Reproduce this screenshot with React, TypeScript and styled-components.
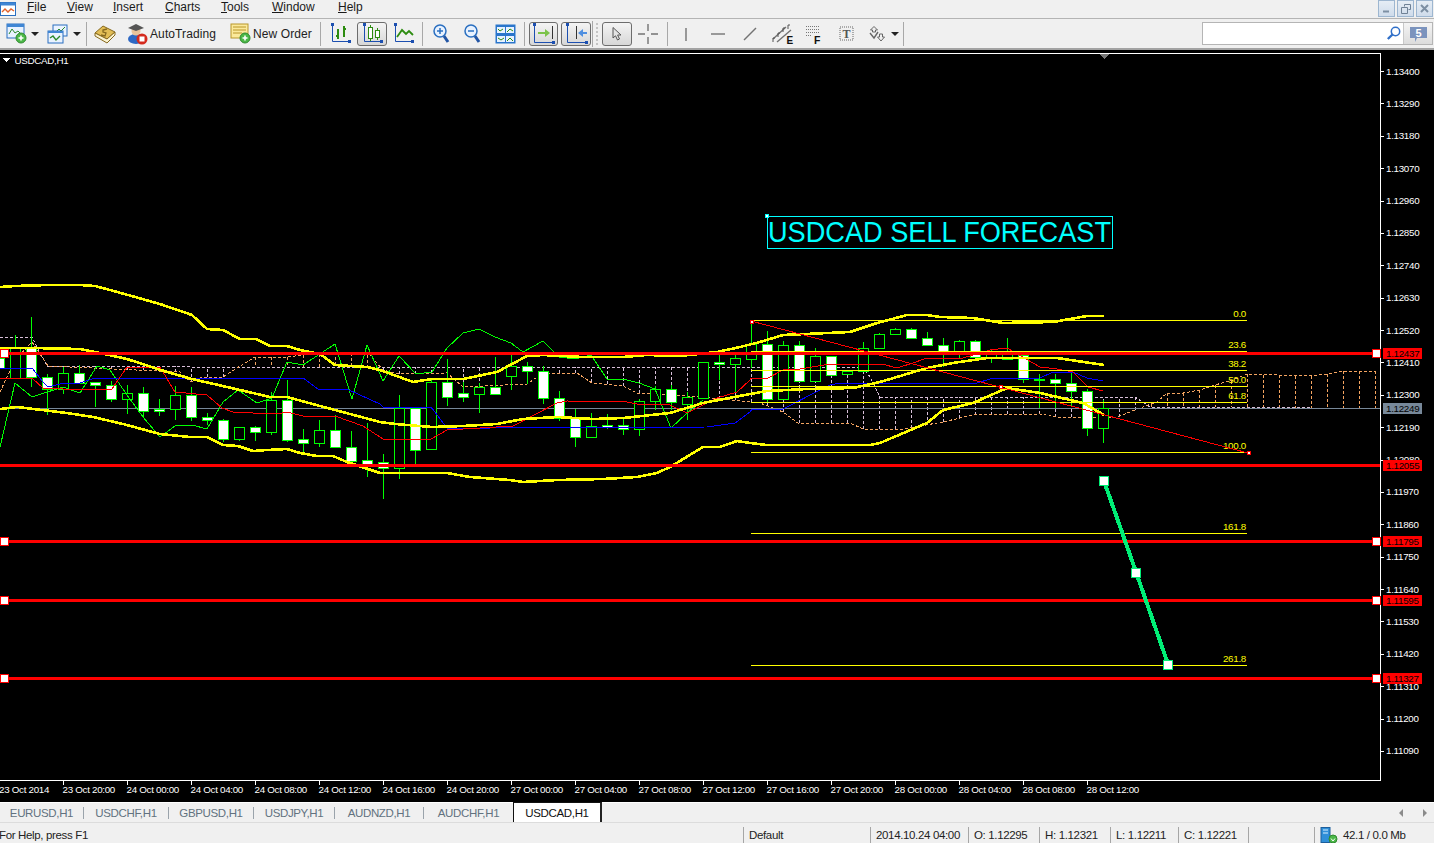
import React from 'react'
import styled, { createGlobalStyle } from 'styled-components'

const GlobalStyle = createGlobalStyle`
  html, body { margin: 0; padding: 0; background: #f0f0f0; overflow: hidden; }
`

type Pt = [number, number]
// x, high, low, body top, body bottom, bearish (white body)
type Candle = [number, number, number, number, number, boolean]

const candles: Candle[] = [
  [-1, 352, 378, 358, 368, true], [15, 335, 378, 347, 378, false], [31, 317, 387, 347, 377, true],
  [47, 374, 415, 377, 389, true], [63, 367, 394, 373, 389, false], [79, 365, 383, 373, 383, true],
  [95, 382, 407, 382, 385, true], [111, 381, 402, 385, 399, true], [127, 385, 414, 393, 399, false],
  [143, 387, 417, 393, 411, true], [159, 399, 416, 409, 411, true], [175, 386, 420, 395, 409, false],
  [191, 387, 421, 395, 417, true], [207, 413, 425, 417, 420, true], [223, 419, 442, 420, 439, true],
  [239, 427, 441, 427, 439, false], [255, 426, 441, 427, 432, true], [271, 392, 435, 400, 432, false],
  [287, 380, 442, 400, 440, true], [303, 429, 452, 439, 443, true], [319, 420, 447, 430, 443, false],
  [335, 415, 447, 430, 447, true], [351, 431, 461, 447, 461, true], [367, 423, 477, 460, 464, true],
  [383, 454, 499, 462, 468, true], [399, 395, 479, 408, 468, false], [415, 408, 465, 408, 450, true],
  [431, 378, 449, 382, 449, false], [447, 359, 406, 382, 397, true], [463, 382, 402, 393, 397, true],
  [479, 383, 413, 387, 394, false], [495, 357, 394, 387, 394, true], [511, 355, 390, 366, 376, false],
  [527, 362, 384, 366, 371, true], [543, 366, 404, 371, 398, true], [559, 391, 421, 398, 418, true],
  [575, 409, 447, 418, 437, true], [591, 413, 437, 426, 437, false], [607, 414, 429, 425, 427, true],
  [623, 418, 435, 425, 429, true], [639, 399, 436, 401, 429, false], [655, 386, 410, 389, 401, false],
  [671, 385, 410, 389, 402, true], [687, 392, 420, 397, 404, false], [703, 362, 398, 362, 398, false],
  [719, 355, 380, 362, 364, true], [735, 355, 392, 358, 364, false], [751, 322, 368, 344, 359, false],
  [767, 331, 403, 344, 399, true], [783, 341, 400, 345, 399, false], [799, 341, 382, 345, 381, true],
  [815, 348, 382, 356, 381, false], [831, 356, 375, 356, 375, true], [847, 371, 375, 371, 374, false],
  [863, 342, 372, 348, 371, false], [879, 333, 348, 334, 348, false], [895, 328, 335, 329, 334, false],
  [911, 328, 338, 329, 338, true], [927, 332, 346, 338, 345, true], [943, 338, 367, 345, 353, true],
  [959, 340, 358, 341, 353, false], [975, 340, 358, 341, 357, true], [991, 350, 363, 353, 357, false],
  [1007, 338, 360, 351, 359, false], [1023, 355, 383, 355, 379, true], [1039, 374, 408, 379, 380, false],
  [1055, 374, 408, 379, 383, true], [1071, 373, 407, 383, 391, true], [1087, 389, 436, 391, 428, true],
  [1103, 400, 443, 408, 428, false],
]

const bandUpper: Pt[] = [
  [0, 287], [15, 286], [48, 285], [80, 285], [95, 286], [110, 290], [128, 295], [160, 304], [192, 315], [207, 329],
  [223, 330], [240, 339], [256, 339], [270, 346], [287, 346], [300, 350], [320, 354], [335, 365], [367, 367],
  [380, 370], [413, 382], [432, 379], [463, 379], [497, 372], [527, 356], [543, 355], [583, 357], [623, 357],
  [647, 355], [680, 356], [717, 352], [740, 347], [760, 342], [783, 335], [850, 332], [877, 323], [907, 315],
  [927, 315], [940, 317], [973, 318], [1003, 323], [1053, 322], [1087, 316], [1104, 316],
]
const bandMiddle: Pt[] = [
  [0, 348], [33, 348], [80, 349], [100, 353], [127, 359], [167, 372], [192, 379], [240, 390], [270, 397], [287, 397],
  [320, 406], [380, 422], [395, 424], [432, 427], [463, 426], [497, 424], [523, 419], [557, 417], [593, 419],
  [623, 418], [670, 413], [703, 403], [750, 394], [767, 391], [807, 389], [853, 388], [880, 382], [927, 368],
  [953, 363], [987, 358], [1057, 358], [1104, 365],
]
const bandLower: Pt[] = [
  [0, 409], [17, 407], [67, 413], [93, 417], [123, 424], [160, 434], [190, 437], [207, 437], [223, 445], [238, 446],
  [253, 451], [267, 450], [287, 449], [300, 453], [317, 456], [333, 456], [347, 462], [380, 473], [387, 473],
  [447, 473], [470, 477], [510, 480], [523, 482], [557, 480], [603, 479], [637, 477], [657, 473], [670, 467],
  [703, 447], [720, 447], [737, 441], [750, 443], [767, 445], [870, 445], [880, 443], [927, 423], [943, 410],
  [973, 403], [1007, 388], [1040, 393], [1083, 403], [1104, 415],
]
const blueLine: Pt[] = [
  [0, 368], [32, 368], [43, 382], [48, 387], [60, 384], [80, 383], [95, 378], [303, 378], [318, 389], [347, 389],
  [380, 404], [383, 407], [431, 407], [447, 428], [483, 429], [490, 428], [707, 427], [735, 423], [750, 412],
  [752, 409], [783, 409], [820, 390], [830, 385], [840, 383], [977, 383], [990, 379], [1040, 378], [1053, 372],
  [1073, 372], [1087, 378], [1103, 381],
]
const redLine: Pt[] = [
  [0, 378], [32, 378], [43, 388], [63, 389], [112, 389], [127, 367], [160, 367], [175, 392], [207, 395], [222, 408],
  [233, 412], [253, 413], [277, 414], [287, 412], [303, 416], [335, 416], [363, 426], [383, 439], [431, 439],
  [447, 430], [513, 426], [557, 403], [567, 401], [627, 402], [637, 404], [670, 405], [687, 413], [717, 398],
  [737, 392], [750, 380], [750, 378], [768, 378], [783, 370], [800, 369], [830, 364], [882, 364], [897, 368],
  [913, 363], [927, 358], [963, 358], [990, 350], [1007, 348], [1040, 367], [1057, 369], [1073, 372], [1088, 387],
  [1103, 391],
]
const greenLine: Pt[] = [
  [0, 447], [15, 383], [32, 397], [63, 387], [80, 393], [97, 366], [110, 370], [127, 395], [143, 417], [160, 437],
  [175, 426], [192, 425], [207, 429], [223, 402], [238, 390], [257, 403], [272, 398], [287, 362], [303, 365],
  [335, 344], [352, 399], [367, 345], [383, 381], [399, 356], [416, 374], [432, 372], [447, 348], [463, 333],
  [479, 329], [495, 337], [511, 343], [523, 352], [543, 341], [559, 357], [575, 359], [591, 355], [607, 379],
  [623, 379], [639, 383], [655, 389], [671, 428], [687, 413], [703, 400],
]
const cloudB: Pt[] = [
  [0, 337], [32, 337], [35, 343], [47, 366], [175, 366], [191, 367], [863, 367],
  [870, 377], [880, 397], [1135, 397], [1150, 407], [1247, 407], [1376, 409],
]
const cloudA: Pt[] = [
  [0, 392], [7, 377], [17, 358], [32, 342], [42, 357], [48, 366], [180, 372], [191, 382], [203, 377], [223, 377],
  [240, 366], [255, 357], [287, 357], [303, 355], [335, 352], [370, 355], [383, 370], [399, 374], [447, 373],
  [463, 387], [527, 384], [543, 373], [577, 373], [592, 383], [623, 386], [637, 393], [703, 397], [750, 402],
  [760, 403], [783, 412], [798, 423], [850, 423], [863, 429], [903, 429], [943, 422], [973, 415], [1040, 414],
  [1057, 417], [1118, 417], [1137, 409], [1157, 402], [1167, 393], [1183, 393], [1200, 390], [1215, 385],
  [1233, 380], [1247, 374], [1310, 376], [1327, 374], [1343, 371], [1376, 371],
]

const priceLabels = [
  '1.13400', '1.13290', '1.13180', '1.13070', '1.12960', '1.12850', '1.12740', '1.12630', '1.12520', '1.12410', '1.12300',
  '1.12190', '1.12080', '1.11970', '1.11860', '1.11750', '1.11640', '1.11530', '1.11420', '1.11310', '1.11200', '1.11090',
]
const timeLabels = [
  '23 Oct 20:00', '24 Oct 00:00', '24 Oct 04:00', '24 Oct 08:00', '24 Oct 12:00', '24 Oct 16:00', '24 Oct 20:00',
  '27 Oct 00:00', '27 Oct 04:00', '27 Oct 08:00', '27 Oct 12:00', '27 Oct 16:00', '27 Oct 20:00', '28 Oct 00:00',
  '28 Oct 04:00', '28 Oct 08:00', '28 Oct 12:00',
]
const fibLevels: [string, number][] = [
  ['0.0', 320.5], ['23.6', 351.5], ['38.2', 370.5], ['50.0', 386.5], ['61.8', 402.5], ['100.0', 452.5],
  ['161.8', 533.5], ['261.8', 665.5],
]
const redLevels: { y: number; label: string; left: boolean; right: boolean }[] = [
  { y: 353, label: '1.12437', left: true, right: true },
  { y: 465, label: '1.12055', left: false, right: false },
  { y: 541, label: '1.11795', left: true, right: true },
  { y: 600, label: '1.11595', left: true, right: true },
  { y: 678, label: '1.11327', left: true, right: true },
]

const toPoints = (pts: Pt[]) => pts.map((p) => p.join(',')).join(' ')
const yAt = (pts: Pt[], x: number) => {
  for (let i = 1; i < pts.length; i++) {
    if (x <= pts[i][0] && pts[i][0] > pts[i - 1][0]) {
      const t = (x - pts[i - 1][0]) / (pts[i][0] - pts[i - 1][0])
      return pts[i - 1][1] + t * (pts[i][1] - pts[i - 1][1])
    }
  }
  return pts[pts.length - 1][1]
}

const Page = styled.div`
  width: 1434px;
  height: 843px;
  display: flex;
  flex-direction: column;
  overflow: hidden;
  background: #f0f0f0;
  font-family: "Liberation Sans", Arial, sans-serif;
  color: #111;
`
const MenuBar = styled.div`
  height: 18px;
  flex: none;
  display: flex;
  align-items: flex-start;
  position: relative;
  border-bottom: 1px solid #b4b4b4;
  font-size: 12px;
  line-height: 15px;
`
const AppIcon = styled.div`
  width: 27px;
  height: 18px;
  flex: none;
  display: flex;
  align-items: center;
`
const MenuItem = styled.span<{ $w: number }>`
  width: ${(p) => p.$w}px;
  flex: none;
  color: #1a1a1a;
`
const WindowButtons = styled.div`
  margin-left: auto;
  display: flex;
  gap: 2px;
  height: 17px;
  margin-right: 1px;
`
const WindowButton = styled.div`
  width: 17px;
  height: 17px;
  box-sizing: border-box;
  border: 1px solid #9db6d0;
  background: linear-gradient(#e6edf5, #cfdceb);
  display: flex;
  align-items: center;
  justify-content: center;
`
const Toolbar = styled.div`
  height: 29px;
  flex: none;
  display: flex;
  align-items: center;
  padding-left: 4px;
  border-bottom: 2px solid #a3a3a3;
  font-size: 12px;
`
const Slot = styled.div<{ $w: number; $ml?: number }>`
  width: ${(p) => p.$w}px;
  margin-left: ${(p) => p.$ml || 0}px;
  height: 24px;
  flex: none;
  display: flex;
  align-items: center;
  justify-content: center;
`
const Pressed = styled(Slot)`
  box-sizing: border-box;
  border: 1px solid #6d6d6d;
  border-radius: 3px;
  background: linear-gradient(#f4f4f4, #d7d7d7);
`
const Caret = styled.div<{ $w: number }>`
  width: ${(p) => p.$w}px;
  flex: none;
  display: flex;
  justify-content: center;
  &::after {
    content: "";
    border-left: 4px solid transparent;
    border-right: 4px solid transparent;
    border-top: 4px solid #222;
  }
`
const Sep = styled.div<{ $ml: number }>`
  width: 1px;
  height: 24px;
  flex: none;
  margin-left: ${(p) => p.$ml}px;
  background: #a8a8a8;
`
const Grip = styled.div`
  width: 11px;
  height: 26px;
  flex: none;
  position: relative;
  border-left: 1px solid #a8a8a8;
  margin-left: 1px;
  margin-right: -1px;
  box-sizing: border-box;
  &::after {
    content: "";
    position: absolute;
    left: 3px;
    top: 2px;
    bottom: 2px;
    width: 2px;
    background: repeating-linear-gradient(#c4c4c4 0 2px, transparent 2px 4px);
  }
`
const LabelledTool = styled.div<{ $ml: number; $w: number }>`
  display: flex;
  align-items: center;
  gap: 2px;
  flex: none;
  width: ${(p) => p.$w}px;
  white-space: nowrap;
  margin-left: ${(p) => p.$ml}px;
  color: #222;
  letter-spacing: 0.1px;
`
const SearchBox = styled.div`
  margin-left: auto;
  margin-right: 1px;
  width: 231px;
  height: 23px;
  box-sizing: border-box;
  border: 1px solid #b5b5b5;
  display: flex;
  flex: none;
`
const SearchInput = styled.div`
  width: 200px;
  background: #fff;
  display: flex;
  align-items: center;
  justify-content: flex-end;
  padding-right: 2px;
  box-sizing: border-box;
`
const MessageButton = styled.div`
  flex: 1;
  display: flex;
  align-items: center;
  justify-content: center;
  border-left: 1px solid #c8c8c8;
  background: linear-gradient(#f4f4f4, #dcdcdc);
`
const ChartArea = styled.svg`
  display: block;
  flex: none;
  width: 1434px;
  height: 752px;
  background: #000;
  shape-rendering: crispEdges;
`
const AxisText = styled.text`
  font-family: "Liberation Sans", Arial, sans-serif;
  font-size: 9.8px;
  letter-spacing: -0.3px;
  fill: #fff;
`
const FibText = styled(AxisText)`
  fill: #ffff00;
  text-anchor: end;
`
const PriceTagText = styled(AxisText)`
  fill: #000;
`
const ForecastText = styled.text`
  font-family: "Liberation Sans", Arial, sans-serif;
  font-size: 29px;
  fill: #00ffff;
`
const TabsRow = styled.div`
  height: 21px;
  flex: none;
  display: flex;
  align-items: stretch;
  border-top: 1px solid #fff;
  border-bottom: 1px solid #dcdcdc;
  box-sizing: border-box;
  font-size: 11.5px;
`
const Tab = styled.div<{ $w: number; $active?: boolean }>`
  width: ${(p) => p.$w}px;
  flex: none;
  box-sizing: border-box;
  display: flex;
  align-items: center;
  justify-content: center;
  letter-spacing: -0.35px;
  color: ${(p) => (p.$active ? '#111' : '#62727f')};
  background: ${(p) => (p.$active ? '#fff' : 'transparent')};
  border-left: ${(p) => (p.$active ? '1px solid #111' : 'none')};
  border-right: ${(p) => (p.$active ? '2px solid #222' : 'none')};
  border-top: ${(p) => (p.$active ? '1px solid #111' : 'none')};
  position: relative;
  margin-top: ${(p) => (p.$active ? '-1px' : '0')};
`
const TabDivider = styled.div`
  width: 1px;
  height: 12px;
  flex: none;
  align-self: center;
  background: #9aa3ab;
`
const TabArrows = styled.div`
  margin-left: auto;
  display: flex;
  align-items: center;
  gap: 20px;
  padding-right: 7px;
`
const ArrowGlyph = styled.div<{ $dir: 'left' | 'right' }>`
  width: 0;
  height: 0;
  border-top: 4px solid transparent;
  border-bottom: 4px solid transparent;
  ${(p) => (p.$dir === 'left' ? 'border-right: 4px solid #8b8b8b;' : 'border-left: 4px solid #8b8b8b;')}
`
const StatusBar = styled.div`
  flex: 1;
  display: flex;
  align-items: flex-end;
  font-size: 11.5px;
  letter-spacing: -0.35px;
  color: #222;
  overflow: hidden;
`
const StatusCell = styled.div<{ $w: number; $divider?: boolean }>`
  width: ${(p) => p.$w}px;
  flex: none;
  height: 16px;
  box-sizing: border-box;
  display: flex;
  align-items: center;
  gap: 5px;
  white-space: nowrap;
  padding-left: ${(p) => (p.$divider ? 5 : 0)}px;
  border-left: ${(p) => (p.$divider ? '1px solid #a6a6a6' : 'none')};
`
const HelpText = styled.span`
  margin-left: -1px;
`

const NewChartIcon = () => (
  <svg width="22" height="21" viewBox="0 0 22 21">
    <rect x="1" y="1" width="17" height="14" fill="#e8f2ff" stroke="#2a6fc0" />
    <rect x="1" y="1" width="17" height="3" fill="#3f86d4" />
    <path d="M3 11 L6 6 L9 10 L12 8 L16 12" fill="none" stroke="#2c8a2c" />
    <circle cx="15" cy="15" r="5" fill="#4cb848" stroke="#2f8a2f" />
    <path d="M12.5 15h5M15 12.5v5" stroke="#fff" strokeWidth="1.6" />
  </svg>
)
const ProfilesIcon = () => (
  <svg width="21" height="20" viewBox="0 0 21 20">
    <rect x="6" y="1" width="14" height="11" fill="#eaf3ff" stroke="#2a6fc0" />
    <path d="M9 8 L12 5 L14 7 L18 3" fill="none" stroke="#2c8a2c" />
    <rect x="1" y="7" width="15" height="12" fill="#eaf3ff" stroke="#2a6fc0" />
    <rect x="1" y="7" width="15" height="2" fill="#3f86d4" />
    <path d="M3 14 L6 12 L9 16 L13 12" fill="none" stroke="#2c8a2c" strokeWidth="1.4" />
  </svg>
)
const BookIcon = () => (
  <svg width="22" height="20" viewBox="0 0 22 20">
    <path d="M1 9 L9 2 L21 8 L13 15 Z" fill="#e2bd55" stroke="#86691f" />
    <path d="M1 9 L1 12 L13 19 L21 11 L21 8 L13 15 Z" fill="#fbf3d0" stroke="#86691f" />
    <path d="M13 5 L9 6 L9 8 L12 9 L11 12 L7 11" fill="none" stroke="#86691f" strokeWidth="1.3" />
  </svg>
)
const AutoTradingIcon = () => (
  <svg width="21" height="22" viewBox="0 0 21 22">
    <ellipse cx="9" cy="16" rx="8" ry="5" fill="#2d68c4" />
    <circle cx="9" cy="8" r="4.5" fill="#e9c39a" />
    <path d="M1 5 L9 1 L17 5 L9 8 Z" fill="#555" />
    <circle cx="15" cy="16" r="5.5" fill="#d42a1e" />
    <rect x="12.5" y="13.5" width="5" height="5" fill="#fff" />
  </svg>
)
const NewOrderIcon = () => (
  <svg width="21" height="21" viewBox="0 0 21 21">
    <rect x="1" y="1" width="17" height="14" fill="#fbe99b" stroke="#b8962a" />
    <path d="M3 4h13M3 7h13M3 10h9" stroke="#b8962a" />
    <circle cx="15" cy="15" r="5" fill="#4cb848" stroke="#2f8a2f" />
    <path d="M12.5 15h5M15 12.5v5" stroke="#fff" strokeWidth="1.6" />
  </svg>
)
const Axes = () => (
  <>
    <path d="M2.5 1V18.5H20" fill="none" stroke="#1c4fb0" />
    <rect x="1" y="0" width="3" height="3" fill="#1c4fb0" />
    <rect x="18" y="17" width="3" height="3" fill="#1c4fb0" />
  </>
)
const BarChartIcon = () => (
  <svg width="21" height="21" viewBox="0 0 21 21">
    <Axes />
    <path d="M8 6v10M6 13h2M14 3v11M14 6h2" stroke="#2d8c10" strokeWidth="2" />
  </svg>
)
const CandleChartIcon = () => (
  <svg width="21" height="21" viewBox="0 0 21 21">
    <Axes />
    <rect x="6.5" y="4.5" width="4" height="11" fill="#fff" stroke="#2d8c10" />
    <rect x="13.5" y="7.5" width="4" height="7" fill="#fff" stroke="#2d8c10" />
    <path d="M8.5 2v2M8.5 16v2M15.5 5v2M15.5 15v2" stroke="#2d8c10" />
  </svg>
)
const LineChartIcon = () => (
  <svg width="21" height="21" viewBox="0 0 21 21">
    <Axes />
    <path d="M4 14 L9 7 L13 11 L16 8 L20 12" fill="none" stroke="#2d8c10" strokeWidth="1.8" />
  </svg>
)
const ZoomIcon = ({ plus }: { plus: boolean }) => (
  <svg width="17" height="20" viewBox="0 0 17 20">
    <circle cx="7" cy="7" r="6" fill="#e8f2ff" stroke="#2a6fc0" strokeWidth="1.5" />
    <path d="M4 7h6" stroke="#2a6fc0" strokeWidth="1.5" />
    {plus && <path d="M7 4v6" stroke="#2a6fc0" strokeWidth="1.5" />}
    <path d="M11 12 L15 18" stroke="#2255a5" strokeWidth="3" />
  </svg>
)
const TileIcon = () => (
  <svg width="21" height="20" viewBox="0 0 21 20">
    <rect x="0.5" y="0.5" width="20" height="19" fill="#2a76cc" />
    <rect x="2" y="3" width="8" height="6" fill="#e8f2ff" />
    <rect x="11" y="3" width="8" height="6" fill="#e8f2ff" />
    <rect x="2" y="12" width="8" height="6" fill="#e8f2ff" />
    <rect x="11" y="12" width="8" height="6" fill="#e8f2ff" />
    <path d="M3 5 L5 7 L8 5M12 8 L15 5 L18 7M3 14 L6 16 L9 14M12 17 L15 14 L18 17" fill="none" stroke="#2d8c10" />
  </svg>
)
const AutoScrollIcon = () => (
  <svg width="25" height="22" viewBox="0 0 25 22">
    <path d="M3.5 1V19.5H24" fill="none" stroke="#1c4fb0" />
    <rect x="2" y="0" width="3" height="3" fill="#1c4fb0" />
    <rect x="21" y="18" width="3" height="3" fill="#1c4fb0" />
    <path d="M7 9h7V6l5 4-5 4v-3H7z" fill="#7cc34a" />
    <path d="M21.5 3v13" stroke="#333" />
  </svg>
)
const ChartShiftIcon = () => (
  <svg width="25" height="22" viewBox="0 0 25 22">
    <path d="M3.5 1V19.5H24" fill="none" stroke="#1c4fb0" />
    <rect x="2" y="0" width="3" height="3" fill="#1c4fb0" />
    <rect x="21" y="18" width="3" height="3" fill="#1c4fb0" />
    <path d="M12.5 3v13" stroke="#333" />
    <path d="M23 9h-4V6l-5 4 5 4v-3h4z" fill="#4f8fe0" />
  </svg>
)
const CursorIcon = () => (
  <svg width="12" height="14" viewBox="0 0 12 14">
    <path d="M2 0.5 V11 L4.5 8.8 L6.5 13 L8.5 12 L6.6 8 L10 8 Z" fill="#e4e4e4" stroke="#555" />
  </svg>
)
const ThinIcon = ({ d, size = 20 }: { d: string; size?: number }) => (
  <svg width={size} height={size} viewBox="0 0 20 20">
    <path d={d} fill="none" stroke="#737373" strokeWidth="1.4" />
  </svg>
)
const ChannelsIcon = () => (
  <svg width="22" height="20" viewBox="0 0 22 20">
    <path d="M1 15 L14 3M5 18 L19 6" stroke="#737373" strokeWidth="1.4" />
    <path d="M1 18v-4h2M6 13V9h2M11 8V4h2M16 5V1h2" fill="none" stroke="#555" />
    <text x="14.5" y="19.5" fontFamily="Liberation Sans" fontSize="10" fontWeight="700" fill="#111">E</text>
  </svg>
)
const FiboIcon = () => (
  <svg width="16" height="20" viewBox="0 0 16 20">
    <path d="M1 2.5h13M1 5.5h13M1 8.5h13M1 11.5h6" stroke="#777" strokeDasharray="1 1" />
    <text x="9" y="19.5" fontFamily="Liberation Sans" fontSize="10.5" fontWeight="700" fill="#111">F</text>
  </svg>
)
const TextToolIcon = () => (
  <svg width="15" height="16" viewBox="0 0 15 16">
    <rect x="1" y="1" width="13" height="13" fill="none" stroke="#666" strokeDasharray="1 1" />
    <text x="3.5" y="12" fontFamily="Liberation Serif" fontSize="12" fontWeight="700" fill="#555">T</text>
  </svg>
)
const ArrowsIcon = () => (
  <svg width="16" height="16" viewBox="0 0 16 16">
    <path d="M5 0.5 L8.5 4 L6.5 4 L6.5 6 L3.5 6 L3.5 4 L1.5 4 Z" fill="none" stroke="#666" />
    <path d="M1 7 L5 12 L9 6" fill="none" stroke="#666" strokeWidth="1.4" />
    <path d="M10.5 8 L13.5 8 L13.5 11 L15.5 11 L12 15 L8.5 11 L10.5 11 Z" fill="none" stroke="#666" />
  </svg>
)
const ServerIcon = () => (
  <svg width="18" height="16" viewBox="0 0 18 16">
    <rect x="1" y="0.5" width="9" height="15" fill="#2f8fd8" stroke="#1c5e9c" />
    <path d="M3 3h5M3 6h5" stroke="#d8eeff" />
    <circle cx="13" cy="12" r="4" fill="#4cb848" stroke="#2f8a2f" />
    <path d="M11 11.5 L13 14 L15 11.5" fill="none" stroke="#fff" />
  </svg>
)

const Chart = () => {
  const ticksX: number[] = []
  for (let x = 15; x <= 1375; x += 16) ticksX.push(x)
  const cy = (y: number) => y - 50
  const yLine = (pts: Pt[]) => pts.map((p) => [p[0], cy(p[1])] as Pt)
  const handle = (x: number, y: number, size: number, stroke: string, key: string) => (
    <rect key={key} x={x - size / 2 + 0.5} y={cy(y) - size / 2 + 0.5} width={size} height={size} fill="#fff" stroke={stroke} />
  )
  return (
    <ChartArea viewBox="0 0 1434 752">
      {/* chart frame */}
      <path d="M0 3.5H1380.5V730.5H0" fill="none" stroke="#fff" />
      {priceLabels.map((p, i) => {
        const y = 71 + i * 32.38
        return (
          <g key={p}>
            <path d={`M1380 ${Math.round(cy(y)) + 0.5}h4`} stroke="#fff" />
            <AxisText x="1386" y={cy(y) + 3.5}>{p}</AxisText>
          </g>
        )
      })}
      <AxisText x="-1" y={cy(792.5)}>23 Oct 2014</AxisText>
      {timeLabels.map((t, i) => {
        const x = 63 + i * 64
        return (
          <g key={t}>
            <path d={`M${x + 0.5} 731v4`} stroke="#fff" />
            <AxisText x={x - 0.5} y={cy(792.5)}>{t}</AxisText>
          </g>
        )
      })}
      {/* symbol caption and shift marker */}
      <path d="M3 8h7l-3.5 4z" fill="#fff" />
      <AxisText x="14.5" y="13.5">USDCAD,H1</AxisText>
      <path d="M1099 4h10l-5 5z" fill="#777" />

      {/* ichimoku cloud */}
      {ticksX.map((x) => {
        const a = yAt(cloudA, x)
        const b = yAt(cloudB, x)
        return (
          <path
            key={x}
            d={`M${x + 0.5} ${cy(a)}V${cy(b)}`}
            stroke={a < b ? '#f4a460' : '#d8bfd8'}
            strokeDasharray="3 2"
          />
        )
      })}
      <polyline points={toPoints(yLine(cloudB))} fill="none" stroke="#d8bfd8" strokeDasharray="3 2" />
      <polyline points={toPoints(yLine(cloudA))} fill="none" stroke="#f4a460" strokeDasharray="3 2" />

      {/* bid line */}
      <path d={`M0 ${cy(408) + 0.5}H1380`} stroke="#778899" />

      {/* candles */}
      {candles.map(([x, high, low, top, bottom, bear]) => (
        <g key={x}>
          <path d={`M${x + 0.5} ${cy(high)}V${cy(low)}`} stroke="#00ff00" />
          <rect
            x={x - 4.5}
            y={cy(top) + 0.5}
            width={10}
            height={Math.max(bottom - top, 1)}
            fill={bear ? '#fff' : '#000'}
            stroke="#00ff00"
          />
        </g>
      ))}

      {/* indicators */}
      <polyline points={toPoints(yLine(greenLine))} fill="none" stroke="#00ff00" />
      <polyline points={toPoints(yLine(blueLine))} fill="none" stroke="#0000ff" />
      <polyline points={toPoints(yLine(redLine))} fill="none" stroke="#ff0000" />
      <polyline points={toPoints(yLine(bandUpper))} fill="none" stroke="#ffff00" strokeWidth="2.6" />
      <polyline points={toPoints(yLine(bandMiddle))} fill="none" stroke="#ffff00" strokeWidth="2.6" />
      <polyline points={toPoints(yLine(bandLower))} fill="none" stroke="#ffff00" strokeWidth="2.6" />

      {/* horizontal levels */}
      {redLevels.map((l) => (
        <g key={l.y}>
          <rect x="0" y={cy(l.y) - 1} width="1380" height="3" fill="#ff0000" />
        </g>
      ))}

      {/* fibonacci */}
      {fibLevels.map(([label, y]) => (
        <g key={label}>
          <path d={`M751 ${cy(y)}H1247`} stroke="#ffff00" />
          <FibText x="1246" y={cy(y) - 4}>{label}</FibText>
        </g>
      ))}
      <path d={`M751 ${cy(321)}L1248 ${cy(453)}`} stroke="#ff0000" />
      {handle(751, 321, 3, '#ff0000', 'f1')}
      {handle(1000, 386, 3, '#ff0000', 'f2')}
      {handle(1248, 452, 3, '#ff0000', 'f3')}

      {/* level handles and price tags */}
      {redLevels.map((l) => (
        <g key={l.y}>
          {l.left && handle(4, l.y, 8, '#ff0000', 'l')}
          {l.right && handle(1376, l.y, 8, '#ff0000', 'r')}
        </g>
      ))}
      <rect x="1383" y={cy(403)} width="39" height="11" fill="#778899" />
      <PriceTagText x="1386" y={cy(412)}>1.12249</PriceTagText>
      {redLevels.map((l) => (
        <g key={l.label}>
          <rect x="1383" y={cy(l.y) - 5} width="39" height="11" fill="#ff0000" />
          <PriceTagText x="1386" y={cy(l.y) + 4}>{l.label}</PriceTagText>
        </g>
      ))}

      {/* forecast line */}
      <polyline
        points={`1104,${cy(481)} 1136,${cy(572)} 1168,${cy(664)}`}
        fill="none"
        stroke="#00ee76"
        strokeWidth="4"
      />
      {handle(1103.5, 480.5, 9, '#00ee76', 'g1')}
      {handle(1135.5, 572.5, 9, '#00ee76', 'g2')}
      {handle(1167.5, 664, 9, '#00ee76', 'g3')}

      {/* forecast caption */}
      <rect x="767.5" y={cy(216.5)} width="345" height="32" fill="none" stroke="#00ffff" />
      <rect x="765.5" y={cy(214.5)} width="3" height="3" fill="#fff" stroke="#00ffff" />
      <ForecastText x="768" y={cy(242)} textLength="343" lengthAdjust="spacingAndGlyphs">USDCAD SELL FORECAST</ForecastText>
    </ChartArea>
  )
}

const tabs: [string, number][] = [
  ['EURUSD,H1', 83], ['USDCHF,H1', 84], ['GBPUSD,H1', 84], ['USDJPY,H1', 80], ['AUDNZD,H1', 88], ['AUDCHF,H1', 89],
]
const menus: [string, string, number][] = [
  ['F', 'ile', 40], ['V', 'iew', 46], ['I', 'nsert', 52], ['C', 'harts', 56], ['T', 'ools', 51], ['W', 'indow', 66], ['H', 'elp', 40],
]

export default function App() {
  return (
    <Page>
      <GlobalStyle />
      <MenuBar>
        <AppIcon>
          <svg width="17" height="16" viewBox="0 0 17 16">
            <rect x="0.5" y="1.5" width="15" height="13" fill="#fff" stroke="#2a6fc0" />
            <rect x="0.5" y="1.5" width="15" height="3" fill="#3f86d4" />
            <path d="M2 11 L5 8 L8 11 L11 8 L14 10" fill="none" stroke="#e2622a" strokeWidth="1.4" />
          </svg>
        </AppIcon>
        {menus.map(([key, rest, w]) => (
          <MenuItem key={key} $w={w}><u>{key}</u>{rest}</MenuItem>
        ))}
        <WindowButtons>
          <WindowButton>
            <svg width="9" height="9" viewBox="0 0 9 9"><path d="M1 7.5h6" stroke="#7d8fa3" strokeWidth="2" /></svg>
          </WindowButton>
          <WindowButton>
            <svg width="10" height="10" viewBox="0 0 10 10">
              <path d="M3.5 2.5V.5h6v5H7.5M.5 3.5h6v6h-6z" fill="none" stroke="#6f8195" />
            </svg>
          </WindowButton>
          <WindowButton>
            <svg width="9" height="9" viewBox="0 0 9 9"><path d="M1 1l7 7M8 1L1 8" stroke="#7d8fa3" strokeWidth="2" /></svg>
          </WindowButton>
        </WindowButtons>
      </MenuBar>
      <Toolbar>
        <Slot $w={26}><NewChartIcon /></Slot>
        <Caret $w={10} />
        <Slot $w={34}><ProfilesIcon /></Slot>
        <Caret $w={6} />
        <Sep $ml={6} />
        <Slot $w={30} $ml={3}><BookIcon /></Slot>
        <LabelledTool $ml={7} $w={90}><AutoTradingIcon />AutoTrading</LabelledTool>
        <LabelledTool $ml={13} $w={82}><NewOrderIcon />New Order</LabelledTool>
        <Sep $ml={8} />
        <Slot $w={30} $ml={4}><BarChartIcon /></Slot>
        <Pressed $w={30} $ml={2}><CandleChartIcon /></Pressed>
        <Slot $w={30} $ml={1}><LineChartIcon /></Slot>
        <Sep $ml={4} />
        <Slot $w={32} $ml={2}><ZoomIcon plus /></Slot>
        <Slot $w={31}><ZoomIcon plus={false} /></Slot>
        <Slot $w={34}><TileIcon /></Slot>
        <Sep $ml={2} />
        <Pressed $w={29} $ml={4}><AutoScrollIcon /></Pressed>
        <Pressed $w={30} $ml={3}><ChartShiftIcon /></Pressed>
        <Grip />
        <Pressed $w={30}><CursorIcon /></Pressed>
        <Slot $w={32}><ThinIcon d="M0 10h7M13 10h7M10 0v7M10 13v7" /></Slot>
        <Sep $ml={3} />
        <Slot $w={36}><ThinIcon d="M10 4v13" /></Slot>
        <Slot $w={28}><ThinIcon d="M3 10h14" /></Slot>
        <Slot $w={36}><ThinIcon d="M4 16L16 4" /></Slot>
        <Slot $w={30}><ChannelsIcon /></Slot>
        <Slot $w={30}><FiboIcon /></Slot>
        <Slot $w={36}><TextToolIcon /></Slot>
        <Slot $w={26}><ArrowsIcon /></Slot>
        <Caret $w={10} />
        <Sep $ml={3} />
        <SearchBox>
          <SearchInput>
            <svg width="15" height="15" viewBox="0 0 15 15">
              <circle cx="9.5" cy="5.5" r="4.2" fill="#fff" stroke="#2f6fc8" strokeWidth="1.5" />
              <path d="M6.5 8.5L1.8 13" stroke="#2f6fc8" strokeWidth="2.4" />
            </svg>
          </SearchInput>
          <MessageButton>
            <svg width="20" height="16" viewBox="0 0 20 16">
              <path d="M2 1h17v11H9l-2 4v-4H2z" fill="#7b93bd" />
              <text x="7.5" y="10.5" fontFamily="Liberation Sans" fontSize="11" fontWeight="700" fill="#fff">5</text>
            </svg>
          </MessageButton>
        </SearchBox>
      </Toolbar>
      <Chart />
      <TabsRow>
        {tabs.map(([name, w], i) => (
          <React.Fragment key={name}>
            <Tab $w={w}>{name}</Tab>
            {i < tabs.length - 1 && <TabDivider />}
          </React.Fragment>
        ))}
        <Tab $w={89} $active>USDCAD,H1</Tab>
        <TabArrows>
          <ArrowGlyph $dir="left" />
          <ArrowGlyph $dir="right" />
        </TabArrows>
      </TabsRow>
      <StatusBar>
        <StatusCell $w={743}><HelpText>For Help, press F1</HelpText></StatusCell>
        <StatusCell $w={127} $divider>Default</StatusCell>
        <StatusCell $w={98} $divider>2014.10.24 04:00</StatusCell>
        <StatusCell $w={71} $divider>O: 1.12295</StatusCell>
        <StatusCell $w={71} $divider>H: 1.12321</StatusCell>
        <StatusCell $w={68} $divider>L: 1.12211</StatusCell>
        <StatusCell $w={70} $divider>C: 1.12221</StatusCell>
        <StatusCell $w={66} $divider />
        <StatusCell $w={120} $divider><ServerIcon />42.1 / 0.0 Mb</StatusCell>
      </StatusBar>
    </Page>
  )
}
